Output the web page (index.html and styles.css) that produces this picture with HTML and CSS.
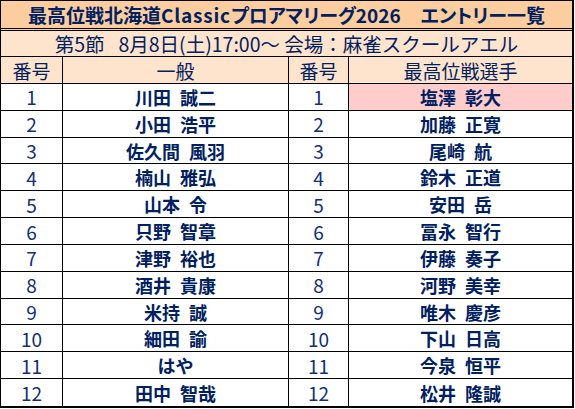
FILE: index.html
```html
<!DOCTYPE html>
<html lang="ja">
<head>
<meta charset="utf-8">
<title>エントリー一覧</title>
<link rel="stylesheet" href="styles.css">
</head>
<body>
<div class="sheet">
  <div class="title">最高位戦北海道<span class="lat">Classic</span>プロアマリーグ2026<span class="gap"></span>エントリー一覧</div>
  <div class="sub">第5節<span class="gap2"></span>8月8日(土)17:00～ 会場：麻雀スクールアエル</div>
  <div class="grid">
    <div class="c h">番号</div><div class="c h">一般</div><div class="c h">番号</div><div class="c h">最高位戦選手</div>
    <div class="c n">1</div><div class="c nm">川田 誠二</div><div class="c n">1</div><div class="c nm pink">塩澤 彰大</div>
    <div class="c n">2</div><div class="c nm">小田 浩平</div><div class="c n">2</div><div class="c nm">加藤 正寛</div>
    <div class="c n">3</div><div class="c nm">佐久間 風羽</div><div class="c n">3</div><div class="c nm">尾崎 航</div>
    <div class="c n">4</div><div class="c nm">楠山 雅弘</div><div class="c n">4</div><div class="c nm">鈴木 正道</div>
    <div class="c n">5</div><div class="c nm">山本 令</div><div class="c n">5</div><div class="c nm">安田 岳</div>
    <div class="c n">6</div><div class="c nm">只野 智章</div><div class="c n">6</div><div class="c nm">冨永 智行</div>
    <div class="c n">7</div><div class="c nm">津野 裕也</div><div class="c n">7</div><div class="c nm">伊藤 奏子</div>
    <div class="c n">8</div><div class="c nm">酒井 貴康</div><div class="c n">8</div><div class="c nm">河野 美幸</div>
    <div class="c n">9</div><div class="c nm">米持 誠</div><div class="c n">9</div><div class="c nm">唯木 慶彦</div>
    <div class="c n">10</div><div class="c nm">細田 諭</div><div class="c n">10</div><div class="c nm">下山 日高</div>
    <div class="c n">11</div><div class="c nm">はや</div><div class="c n">11</div><div class="c nm">今泉 恒平</div>
    <div class="c n">12</div><div class="c nm">田中 智哉</div><div class="c n">12</div><div class="c nm">松井 隆誠</div>
  </div>
</div>
</body>
</html>
```
FILE: styles.css
```css
html, body {
  margin: 0;
  padding: 0;
  background: #ffffff;
}
body {
  font-family: "Noto Sans CJK JP", "Noto Sans", sans-serif;
  color: #002060;
}
.sheet {
  width: 574px;
  box-sizing: border-box;
  border-left: 1px solid #000;
  border-right: 2px solid #000;
  border-bottom: 2px solid #000;
  border-top: 1px solid #000;
}
.title {
  height: 30px;
  box-sizing: border-box;
  background: #fccd9e;
  border-bottom: 3px double #000;
  font-weight: bold;
  font-size: 19px;
  line-height: 27px;
  text-align: center;
  white-space: nowrap;
  font-feature-settings: "palt";
}
.title .lat {
  letter-spacing: 0.8px;
}
.gap {
  display: inline-block;
  width: 20px;
}
.sub {
  height: 26px;
  box-sizing: border-box;
  background: #fee4cc;
  border-bottom: 1px solid #000;
  font-size: 19.5px;
  line-height: 25px;
  text-align: center;
  white-space: nowrap;
}
.gap2 {
  display: inline-block;
  width: 14px;
}
.grid {
  display: grid;
  grid-template-columns: 61px 226px 60px 224px;
  grid-template-rows: 27px repeat(12, 26.83px);
}
.c {
  box-sizing: border-box;
  border-left: 1px solid #000;
  border-bottom: 1px solid #000;
  text-align: center;
  white-space: nowrap;
  display: flex;
  align-items: center;
  justify-content: center;
}
.c:nth-child(4n+1) {
  border-left: none;
}
.grid .c:nth-last-child(-n+4) {
  border-bottom: none;
}
.h {
  background: #fee4cc;
  font-size: 19px;
}
.n {
  font-size: 19px;
  color: #0f2f78;
}
.nm {
  font-size: 18px;
  font-weight: bold;
  word-spacing: 5px;
}
.pink {
  background: #ffcccc;
}
```
